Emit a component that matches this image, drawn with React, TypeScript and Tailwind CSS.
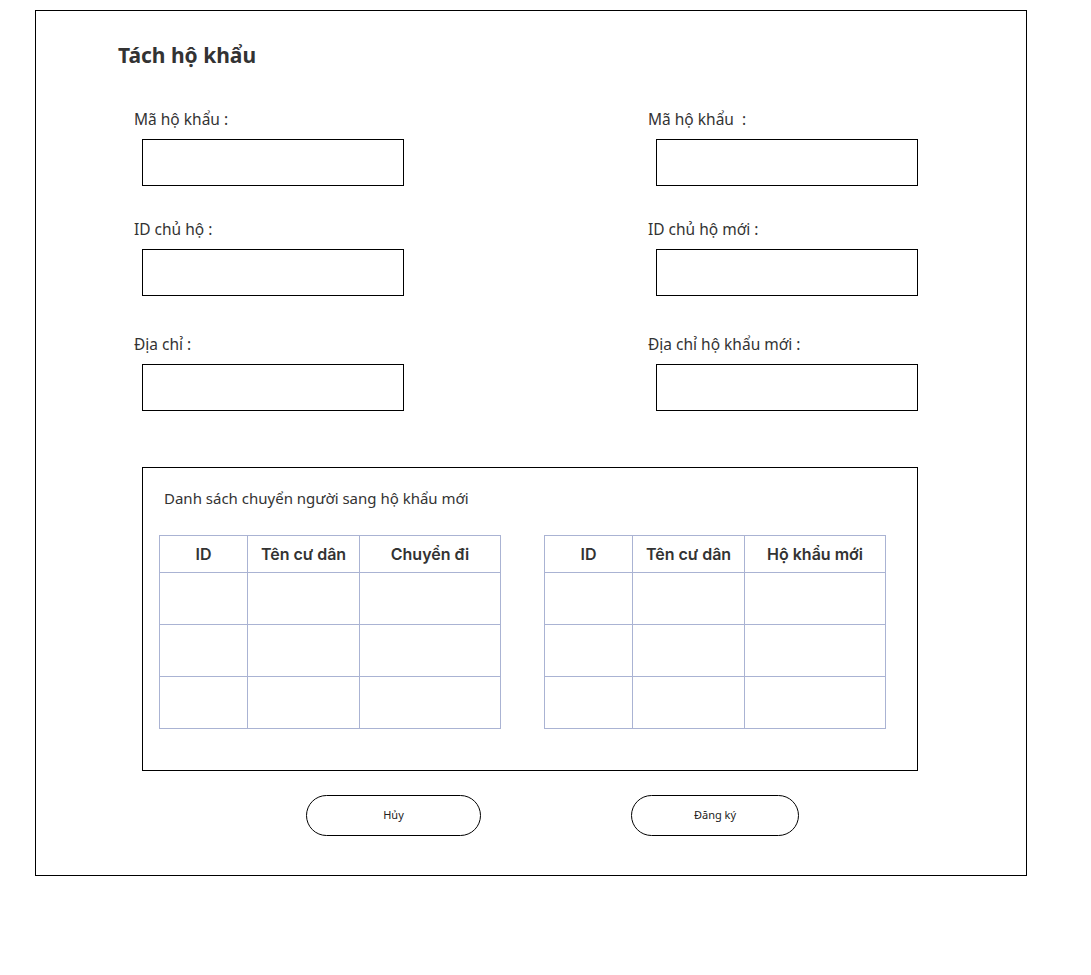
import React from "react";

const sans = { fontFamily: '"Noto Sans", "Open Sans", sans-serif' };

function Row({ left, right, mt }: { left: string; right: string; mt: string }) {
  return (
    <div className={`flex ml-[98px] ${mt}`}>
      <div className="w-[514px]">
        <div className="text-[15.5px] leading-[22px] h-[22px] text-[#333333] whitespace-pre">{left}</div>
        <div className="mt-[9px] ml-[8px] w-[262px] h-[47px] border border-black" />
      </div>
      <div className="w-[300px]">
        <div className="text-[15.5px] leading-[22px] h-[22px] text-[#333333] whitespace-pre">{right}</div>
        <div className="mt-[9px] ml-[8px] w-[262px] h-[47px] border border-black" />
      </div>
    </div>
  );
}

function Table({ headers }: { headers: string[] }) {
  const rows = [0, 1, 2];
  return (
    <div
      className="w-[342px] grid grid-cols-[88px_112px_141px] border-l border-t border-[#aab3d3]"
      style={{ fontFamily: 'Inter, "Noto Sans", sans-serif' }}
    >
      {headers.map((h) => (
        <div
          key={h}
          className="h-[37px] border-r border-b border-[#aab3d3] flex items-center justify-center text-[16px] font-semibold text-[#333333]"
        >
          {h}
        </div>
      ))}
      {rows.map((r) =>
        headers.map((h) => (
          <div key={`${r}-${h}`} className="h-[52px] border-r border-b border-[#aab3d3]" />
        ))
      )}
    </div>
  );
}

export default function App() {
  return (
    <div className="w-[1091px] h-[975px] bg-white pt-[10px] pl-[35px]" style={sans}>
      <div className="w-[992px] h-[866px] border border-black flex flex-col">
        <div className="ml-[82px] mt-[30px] text-[21px] leading-[28px] font-bold text-[#333333]">
          Tách hộ khẩu
        </div>
        <Row left="Mã hộ khẩu :" right="Mã hộ khẩu  :" mt="mt-[39px]" />
        <Row left="ID chủ hộ :" right="ID chủ hộ mới :" mt="mt-[32px]" />
        <Row left="Địa chỉ :" right="Địa chỉ hộ khẩu mới :" mt="mt-[37px]" />
        <div className="ml-[106px] mt-[56px] w-[776px] h-[304px] border border-black pt-[20px] pl-[16px]">
          <div className="ml-[5px] text-[15px] leading-[20px] text-[#333333]">
            Danh sách chuyển người sang hộ khẩu mới
          </div>
          <div className="mt-[27px] flex gap-[43px]">
            <Table headers={["ID", "Tên cư dân", "Chuyển đi"]} />
            <Table headers={["ID", "Tên cư dân", "Hộ khẩu mới"]} />
          </div>
        </div>
        <div className="mt-[24px] ml-[270px] flex gap-[150px]">
          <button className="w-[175px] h-[41px] rounded-full border border-black text-[11px] text-[#222222] bg-white">
            Hủy
          </button>
          <button className="w-[168px] h-[41px] rounded-full border border-black text-[11px] text-[#222222] bg-white">
            Đăng ký
          </button>
        </div>
      </div>
    </div>
  );
}
